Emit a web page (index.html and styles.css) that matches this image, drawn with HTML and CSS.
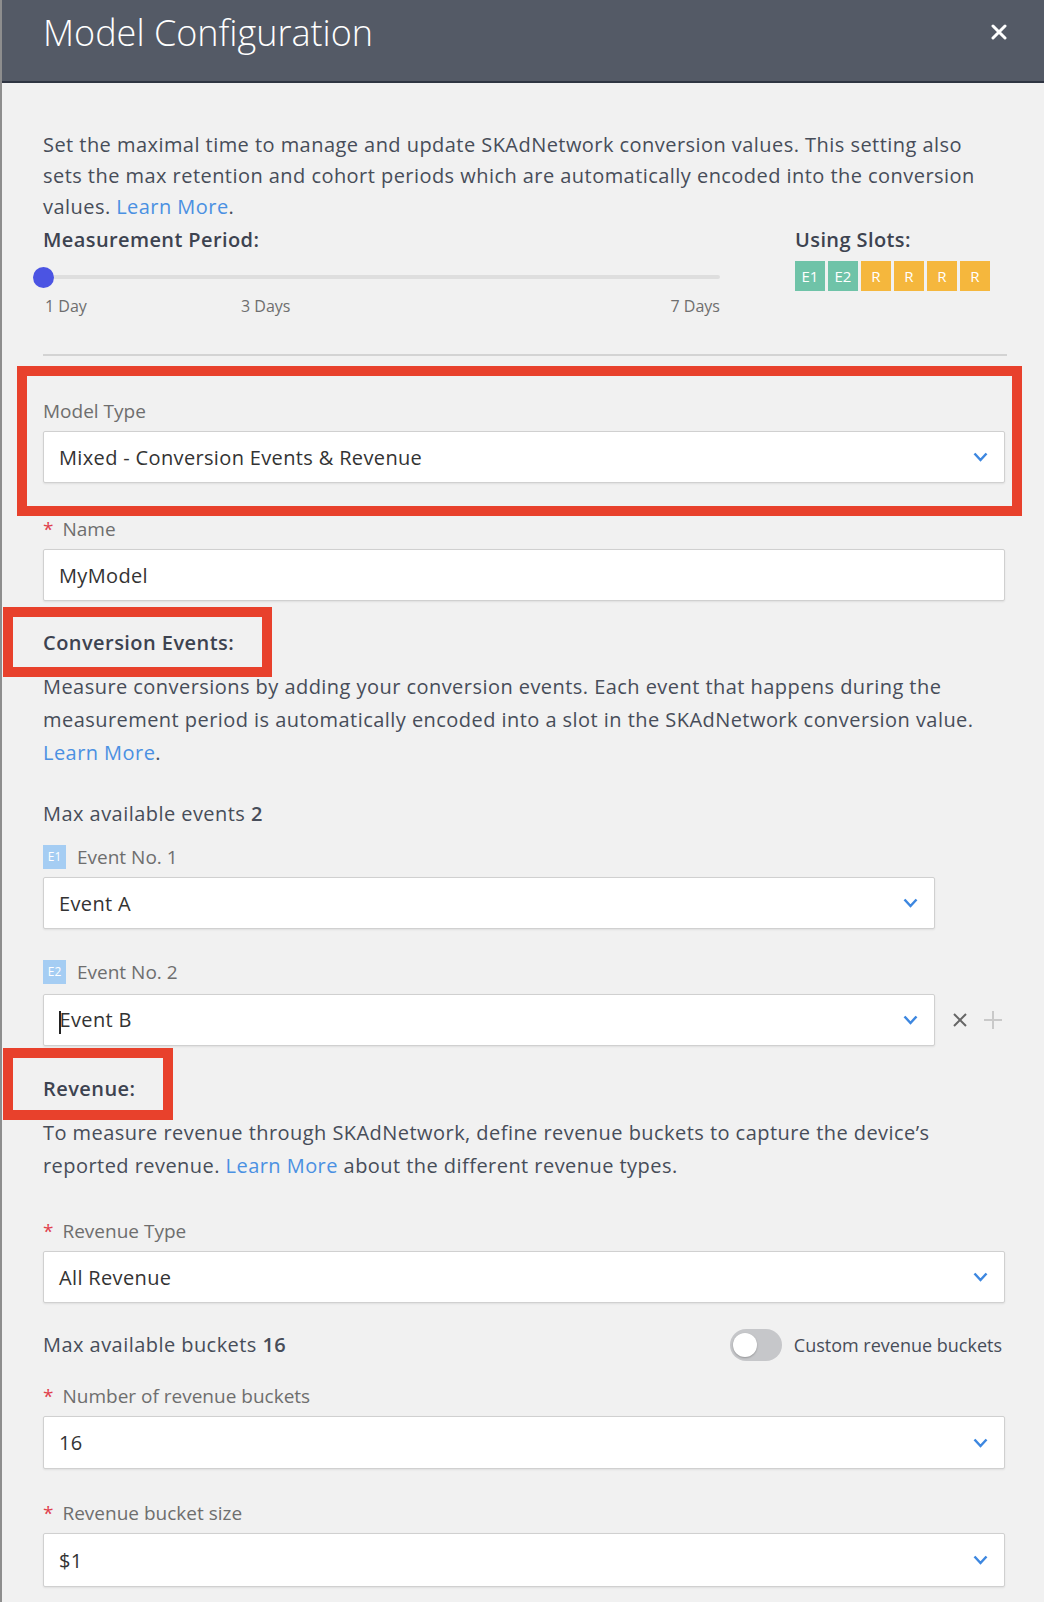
FILE: index.html
```html
<!DOCTYPE html>
<html lang="en">

<head>
    <meta charset="UTF-8">
    <meta name="viewport" content="width=device-width, initial-scale=1.0">
    <title>Model Configuration</title>
    <link rel="stylesheet" href="styles.css">
</head>

<body>
    <div class="modal">
        <header class="modal-header">
            <h1 class="modal-title">Model Configuration</h1>
            <button class="close-btn" aria-label="Close">
                <svg width="16" height="16" viewBox="0 0 16 16">
                    <path d="M2 2 L14 14 M14 2 L2 14" stroke="#fff" stroke-width="3" stroke-linecap="round" />
                </svg>
            </button>
        </header>

        <div class="modal-body">
            <p class="intro">Set the maximal time to manage and update SKAdNetwork conversion values. This setting also sets the max retention and cohort periods which are automatically encoded into the conversion values. <a href="#">Learn More</a>.</p>

            <div class="period">
                <div class="period-main">
                    <h4 class="field-heading">Measurement Period:</h4>
                    <div class="slider">
                        <div class="slider-track"></div>
                        <span class="slider-knob"></span>
                    </div>
                    <div class="slider-labels">
                        <span class="day-first">1 Day</span>
                        <span>3 Days</span>
                        <span class="day-last">7 Days</span>
                    </div>
                </div>
                <div class="slots">
                    <h4 class="field-heading">Using Slots:</h4>
                    <div class="slot-list">
                        <span class="slot slot-event">E1</span>
                        <span class="slot slot-event">E2</span>
                        <span class="slot slot-rev">R</span>
                        <span class="slot slot-rev">R</span>
                        <span class="slot slot-rev">R</span>
                        <span class="slot slot-rev">R</span>
                    </div>
                </div>
            </div>

            <div class="divider"></div>

            <!-- model type -->
            <div class="field field-model annotated">
                <label class="field-label">Model Type</label>
                <div class="select">
                    <span>Mixed - Conversion Events &amp; Revenue</span>
                    <svg class="chevron" width="15" height="10" viewBox="0 0 15 10"><polyline points="1.5,1.5 7.5,8 13.5,1.5" fill="none" stroke="#3d87e0" stroke-width="2.5" /></svg>
                </div>
            </div>

            <div class="field field-name">
                <label class="field-label"><span class="req">*</span>Name</label>
                <div class="select">
                    <span>MyModel</span>
                </div>
            </div>

            <!-- conversion events -->
            <h3 class="section-title title-events"><span class="annotated annotated-events">Conversion Events:</span></h3>
            <p class="section-text">Measure conversions by adding your conversion events. Each event that happens during the measurement period is automatically encoded into a slot in the SKAdNetwork conversion value. <a href="#">Learn More</a>.</p>

            <div class="max-line max-events">Max available events <b>2</b></div>

            <div class="field field-event1">
                <label class="field-label"><span class="badge">E1</span>Event No. 1</label>
                <div class="select select-event">
                    <span>Event A</span>
                    <svg class="chevron" width="15" height="10" viewBox="0 0 15 10"><polyline points="1.5,1.5 7.5,8 13.5,1.5" fill="none" stroke="#3d87e0" stroke-width="2.5" /></svg>
                </div>
            </div>

            <div class="field field-event2">
                <label class="field-label"><span class="badge">E2</span>Event No. 2</label>
                <div class="event-row">
                    <div class="select select-event">
                        <span><i class="caret"></i>Event B</span>
                        <svg class="chevron" width="15" height="10" viewBox="0 0 15 10"><polyline points="1.5,1.5 7.5,8 13.5,1.5" fill="none" stroke="#3d87e0" stroke-width="2.5" /></svg>
                    </div>
                    <div class="event-actions">
                        <svg width="16" height="16" viewBox="0 0 16 16"><path d="M2 2 L14 14 M14 2 L2 14" stroke="#666" stroke-width="2" /></svg>
                        <svg width="20" height="20" viewBox="0 0 20 20"><path d="M10 1 V19 M1 10 H19" stroke="#c9c9c9" stroke-width="2" /></svg>
                    </div>
                </div>
            </div>

            <!-- revenue -->
            <h3 class="section-title title-revenue"><span class="annotated annotated-revenue">Revenue:</span></h3>
            <p class="section-text">To measure revenue through SKAdNetwork, define revenue buckets to capture the device’s reported revenue. <a href="#">Learn More</a> about the different revenue types.</p>

            <div class="field field-revtype">
                <label class="field-label"><span class="req">*</span>Revenue Type</label>
                <div class="select">
                    <span>All Revenue</span>
                    <svg class="chevron" width="15" height="10" viewBox="0 0 15 10"><polyline points="1.5,1.5 7.5,8 13.5,1.5" fill="none" stroke="#3d87e0" stroke-width="2.5" /></svg>
                </div>
            </div>

            <div class="buckets-row">
                <div class="max-line">Max available buckets <b>16</b></div>
                <label class="toggle-wrap">
                    <span class="toggle"><span class="toggle-knob"></span></span>
                    <span class="toggle-text">Custom revenue buckets</span>
                </label>
            </div>

            <div class="field field-count">
                <label class="field-label"><span class="req">*</span>Number of revenue buckets</label>
                <div class="select">
                    <span>16</span>
                    <svg class="chevron" width="15" height="10" viewBox="0 0 15 10"><polyline points="1.5,1.5 7.5,8 13.5,1.5" fill="none" stroke="#3d87e0" stroke-width="2.5" /></svg>
                </div>
            </div>

            <div class="field field-size">
                <label class="field-label"><span class="req">*</span>Revenue bucket size</label>
                <div class="select">
                    <span>$1</span>
                    <svg class="chevron" width="15" height="10" viewBox="0 0 15 10"><polyline points="1.5,1.5 7.5,8 13.5,1.5" fill="none" stroke="#3d87e0" stroke-width="2.5" /></svg>
                </div>
            </div>
        </div>
    </div>
</body>

</html>
```

FILE: styles.css
```css
:root {
    --header-bg: #545a66;
    --body-bg: #f1f1f1;
    --text-color: #474d59;
    --label-color: #6e6e6e;
    --link-color: #4a90e2;
    --border-color: #d0d0d0;
    --mark-color: #e8412c;
    --slot-green: #6fc3a8;
    --slot-orange: #f5b73d;
}

* {
    box-sizing: border-box;
    margin: 0;
    padding: 0;
}

body {
    font-family: 'Open Sans', 'Noto Sans', sans-serif;
    color: var(--text-color);
    background-color: var(--body-bg);
}

a {
    color: var(--link-color);
    text-decoration: none;
}

.modal {
    width: 1044px;
    min-height: 1602px;
    background-color: var(--body-bg);
    border-left: 2px solid #8e8e8e;
}

.modal-header {
    height: 83px;
    display: flex;
    justify-content: space-between;
    align-items: flex-start;
    padding: 15px 37px 0 41px;
    background-color: var(--header-bg);
    border-bottom: 2px solid #2f3542;
}

.modal-title {
    font-size: 36px;
    font-weight: 300;
    line-height: 35px;
    color: #fff;
}

.close-btn {
    margin-top: 9px;
    background: none;
    border: none;
    width: 16px;
    height: 16px;
}

.modal-body {
    padding: 0 39px 0 41px;
}

.intro {
    margin-top: 46px;
    font-size: 20px;
    letter-spacing: 0.45px;
    line-height: 31px;
}

/* measurement period */
.period {
    margin-top: 4px;
    display: grid;
    grid-template-columns: 677px 1fr;
    column-gap: 75px;
}

.field-heading {
    font-size: 20px;
    font-weight: 600;
    letter-spacing: 0.4px;
    line-height: 28px;
    color: #3d4350;
}

.slider {
    position: relative;
    height: 23px;
    padding-top: 10px;
    margin: 11px 0 0 -10px;
}

.slider-track {
    height: 4px;
    border-radius: 2px;
    background-color: #dedede;
}

.slider-knob {
    position: absolute;
    left: 0;
    top: 2px;
    width: 21px;
    height: 21px;
    border-radius: 50%;
    background-color: #4b54e3;
}

.slider-labels {
    display: flex;
    margin-top: 8px;
    padding-left: 2px;
    font-size: 16px;
    line-height: 20px;
    color: #6e6e6e;
}

.day-first {
    width: 196px;
}

.day-last {
    margin-left: auto;
}

.slot-list {
    display: flex;
    gap: 3px;
    margin-top: 7px;
}

.slot {
    width: 30px;
    height: 30px;
    display: flex;
    align-items: center;
    justify-content: center;
    font-size: 15px;
    color: #fff;
}

.slot-event {
    background-color: var(--slot-green);
}

.slot-rev {
    background-color: var(--slot-orange);
}

.divider {
    margin-top: 38px;
    height: 2px;
    margin-right: -2px;
    background-color: #d3d3d3;
}

/* fields */
.field-label {
    display: flex;
    align-items: center;
    font-size: 19px;
    line-height: 26px;
    color: var(--label-color);
    margin-bottom: 7px;
}

.req {
    color: #e0404c;
    margin-right: 9px;
}

.badge {
    width: 23px;
    height: 24px;
    margin-right: 11px;
    display: inline-flex;
    align-items: center;
    justify-content: center;
    font-size: 12px;
    color: #fff;
    background-color: #a5cdf3;
}

.select {
    height: 52px;
    display: flex;
    align-items: center;
    justify-content: space-between;
    padding: 0 16px 0 15px;
    background-color: #fff;
    border: 1px solid var(--border-color);
    border-radius: 2px;
    box-shadow: 0 1px 2px rgba(0, 0, 0, 0.08);
    font-size: 20px;
    letter-spacing: 0.35px;
    color: #333;
}

.select-event {
    width: 892px;
}

.caret {
    display: inline-block;
    width: 1.5px;
    height: 23px;
    margin-right: -1px;
    vertical-align: middle;
    background-color: #222;
}

.event-row {
    display: flex;
    align-items: center;
}

.event-actions {
    display: flex;
    align-items: center;
    gap: 15px;
    margin-left: 17px;
}

.field-model {
    margin-top: 42px;
}

.field-name {
    margin-top: 33px;
}

.field-event1 {
    margin-top: 17px;
}

.field-event2 {
    margin-top: 30px;
}

.field-event2 .field-label {
    margin-bottom: 9px;
}

.field-revtype {
    margin-top: 36px;
}

.field-count {
    margin-top: 22px;
}

.field-count .select {
    height: 53px;
}

.field-size {
    margin-top: 31px;
}

.field-size .select {
    height: 54px;
}

/* sections */
.section-title {
    font-size: 20px;
    font-weight: 600;
    letter-spacing: 0.45px;
    line-height: 28px;
    color: #3d4350;
}

.title-events {
    margin-top: 28px;
}

.title-revenue {
    margin-top: 29px;
}

.section-text {
    margin-top: 13px;
    font-size: 20px;
    letter-spacing: 0.45px;
    line-height: 33px;
}

.max-line {
    font-size: 20px;
    letter-spacing: 0.45px;
    line-height: 26px;
}

.max-line b {
    font-weight: 600;
}

.max-events {
    margin-top: 32px;
}

.buckets-row {
    margin-top: 26px;
    height: 32px;
    display: flex;
    align-items: center;
    justify-content: space-between;
}

.toggle-wrap {
    display: flex;
    align-items: center;
    gap: 12px;
    margin-right: 3px;
}

.toggle {
    position: relative;
    width: 52px;
    height: 32px;
    border-radius: 16px;
    background-color: #c6c7ca;
}

.toggle-knob {
    position: absolute;
    left: 3px;
    top: 4px;
    width: 24px;
    height: 24px;
    border-radius: 50%;
    background-color: #fff;
    box-shadow: 0 1px 2px rgba(0, 0, 0, 0.25);
}

.toggle-text {
    font-size: 18px;
    color: var(--text-color);
}

/* red annotation frames */
.annotated {
    position: relative;
}

.annotated::after {
    content: '';
    box-sizing: border-box;
    position: absolute;
    border: 10px solid var(--mark-color);
    pointer-events: none;
}

.field-model::after {
    top: -32px;
    bottom: -33px;
    left: -26px;
    right: -17px;
}

.annotated-events::after {
    top: -22px;
    left: -40px;
    width: 269px;
    height: 70px;
}

.annotated-revenue::after {
    top: -27px;
    left: -40px;
    width: 170px;
    height: 72px;
}
```
